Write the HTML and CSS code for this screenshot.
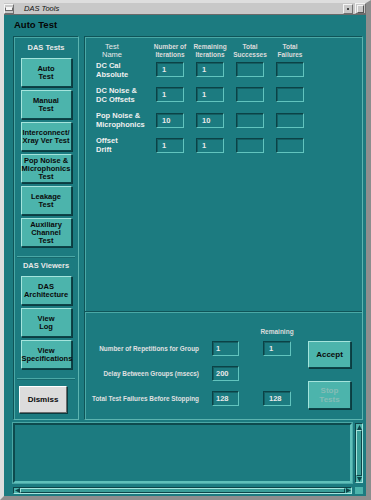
FILE: index.html
```html
<!DOCTYPE html>
<html lang="en">
<head>
    <meta charset="UTF-8">
    <meta name="viewport" content="width=device-width, initial-scale=1.0">
    <title>DAS Tools</title>
    <link rel="stylesheet" href="styles.css">
</head>
<body>
    <div class="window">
        <div class="titlebar">
            <span class="tb-btn menu"><span class="bar"></span></span>
            <span class="tb-title">DAS Tools</span>
            <span class="tb-btn mini"><span class="dot"></span></span>
            <span class="tb-btn maxi"><span class="sq"></span></span>
        </div>

        <div class="client">
            <h1>Auto Test</h1>

            <div class="panels">
                <div class="side">
                    <div class="side-label">DAS Tests</div>
                    <button class="btn">Auto<br>Test</button>
                    <button class="btn">Manual<br>Test</button>
                    <button class="btn">Interconnect/<br>Xray Ver Test</button>
                    <button class="btn">Pop Noise &amp;<br>Microphonics<br>Test</button>
                    <button class="btn">Leakage<br>Test</button>
                    <button class="btn">Auxiliary<br>Channel<br>Test</button>
                    <div class="sep"></div>
                    <div class="side-label">DAS Viewers</div>
                    <button class="btn">DAS<br>Architecture</button>
                    <button class="btn">View<br>Log</button>
                    <button class="btn">View<br>Specifications</button>
                    <div class="sep"></div>
                    <button class="btn dismiss">Dismiss</button>
                </div>

                <div class="main">
                    <div class="tests head">
                        <div class="th name"><span>Test</span><span>Name</span></div>
                        <div class="th"><span>Number of</span><span>Iterations</span></div>
                        <div class="th"><span>Remaining</span><span>Iterations</span></div>
                        <div class="th"><span>Total</span><span>Successes</span></div>
                        <div class="th"><span>Total</span><span>Failures</span></div>
                    </div>

                    <div class="tests rows">
                        <div class="row-label">DC Cal<br>Absolute</div>
                        <div class="field">1</div>
                        <div class="field">1</div>
                        <div class="field"></div>
                        <div class="field"></div>

                        <div class="row-label">DC Noise &amp;<br>DC Offsets</div>
                        <div class="field">1</div>
                        <div class="field">1</div>
                        <div class="field"></div>
                        <div class="field"></div>

                        <div class="row-label">Pop Noise &amp;<br>Microphonics</div>
                        <div class="field">10</div>
                        <div class="field">10</div>
                        <div class="field"></div>
                        <div class="field"></div>

                        <div class="row-label">Offset<br>Drift</div>
                        <div class="field">1</div>
                        <div class="field">1</div>
                        <div class="field"></div>
                        <div class="field"></div>
                    </div>

                    <div class="settings">
                        <div class="params">
                            <div class="remaining"><span>Remaining</span></div>
                            <div class="param-grid">
                                <div class="param-label">Number of Repetitions for Group</div>
                                <div class="field short">1</div>
                                <div class="field">1</div>

                                <div class="param-label">Delay Between Groups (msecs)</div>
                                <div class="field short">200</div>
                                <div></div>

                                <div class="param-label">Total Test Failures Before Stopping</div>
                                <div class="field short">128</div>
                                <div class="field">128</div>
                            </div>
                        </div>
                        <div class="actions">
                            <button class="btn accept">Accept</button>
                            <button class="btn stop">Stop<br>Tests</button>
                        </div>
                    </div>
                </div>
            </div>

            <div class="log">
                <div class="log-text"></div>
                <div class="vscroll">
                    <span class="arrow"><svg width="5" height="5" viewBox="0 0 5 5"><path d="M0 5 L2.5 0 L5 5 Z" fill="#0d4448"/></svg></span>
                    <span class="thumb"></span>
                    <span class="arrow"><svg width="5" height="5" viewBox="0 0 5 5"><path d="M0 0 L5 0 L2.5 5 Z" fill="#0d4448"/></svg></span>
                </div>
                <div class="hscroll">
                    <span class="arrow"><svg width="5" height="5" viewBox="0 0 5 5"><path d="M5 0 L5 5 L0 2.5 Z" fill="#0d4448"/></svg></span>
                    <span class="thumb"></span>
                    <span class="arrow"><svg width="5" height="5" viewBox="0 0 5 5"><path d="M0 0 L5 2.5 L0 5 Z" fill="#0d4448"/></svg></span>
                </div>
                <div class="corner"></div>
            </div>
        </div>
    </div>
</body>
</html>
```

FILE: styles.css
```css
body {
    margin: 0;
    font-family: "Liberation Sans", Arial, sans-serif;
    background-color: #bdbdbd;
}
.window {
    width: 371px;
    height: 500px;
    box-sizing: border-box;
    display: flex;
    flex-direction: column;
    border-style: solid;
    border-width: 3px 5px 4px 4px;
    border-color: #dedede #8e8e8e #8e8e8e #dedede;
    background-color: #c4c4c4;
}
.titlebar {
    height: 11px;
    display: flex;
    align-items: center;
    gap: 2px;
    background-color: #c8c8c8;
    border-bottom: 1px solid #6a6a6a;
}
.tb-btn {
    box-sizing: border-box;
    display: flex;
    align-items: center;
    justify-content: center;
    border: 1px solid;
    border-color: #f4f4f4 #707070 #707070 #f4f4f4;
    background-color: #c8c8c8;
}
.menu {
    width: 10px;
    height: 10px;
}
.menu .bar {
    width: 6px;
    height: 2px;
    background-color: #f4f4f4;
    border: 1px solid #6a6a6a;
    border-top-color: #f4f4f4;
}
.tb-title {
    margin-left: 8px;
    font-size: 7.5px;
    font-style: italic;
    color: #111;
}
.mini {
    margin-left: auto;
    width: 10px;
    height: 10px;
}
.mini .dot {
    width: 2px;
    height: 2px;
    background-color: #444;
}
.maxi {
    width: 11px;
    height: 11px;
}
.maxi .sq {
    width: 5px;
    height: 6px;
    border: 1px solid #555;
    border-top-color: #f4f4f4;
    border-left-color: #f4f4f4;
}
.client {
    flex: 1;
    display: flex;
    flex-direction: column;
    padding: 4px 3px 2px 9px;
    background-color: #1c7b80;
}
h1 {
    margin: 0 0 5px 1px;
    font-size: 9.5px;
    line-height: 12px;
    color: #050505;
}
.panels {
    height: 384px;
    display: flex;
    gap: 5px;
}
.side {
    width: 66px;
    box-sizing: border-box;
    display: flex;
    flex-direction: column;
    align-items: center;
    padding-top: 6px;
    border: 1px solid #5cb4b0;
    border-top-color: #0f5458;
    border-left-color: #0f5458;
    box-shadow: inset 1px 1px 0 #4aa8a6;
}
.side-label {
    font-size: 7.5px;
    font-weight: bold;
    line-height: 10px;
    color: #e8e8e8;
    margin-bottom: 5px;
}
.btn {
    width: 51px;
    height: 29px;
    box-sizing: border-box;
    padding: 0;
    margin: 0 0 3px 0;
    font-family: "Liberation Sans", Arial, sans-serif;
    font-size: 7.5px;
    font-weight: bold;
    line-height: 8px;
    color: #0a0a0a;
    white-space: nowrap;
    background-color: #4cb4ac;
    border: 1px solid;
    border-color: #a4e4dc #0d4448 #0d4448 #a4e4dc;
    box-shadow: 1px 1px 0 #0b3c40;
    overflow: visible;
}
.sep {
    align-self: stretch;
    margin: 6px 3px 3px;
    height: 1px;
    background-color: #4aa8a6;
    border-bottom: 1px solid #176a6e;
}
.dismiss {
    width: 48px;
    height: 27px;
    align-self: flex-start;
    margin: 3px 0 0 5px;
    font-size: 8px;
    background-color: #dcdcdc;
    border-color: #ffffff #6c6c6c #6c6c6c #ffffff;
}
.main {
    flex: 1;
    box-sizing: border-box;
    display: flex;
    flex-direction: column;
    padding-top: 6px;
    border: 1px solid #5cb4b0;
    border-top-color: #0f5458;
    border-left-color: #0f5458;
    box-shadow: inset 1px 1px 0 #4aa8a6;
}
.tests {
    display: grid;
    grid-template-columns: 60px 40px 40px 40px 40px;
    padding-left: 11px;
}
.head {
    height: 16px;
    margin-bottom: 1.5px;
}
.th {
    width: 28px;
    display: flex;
    flex-direction: column;
    align-items: center;
    font-size: 6.5px;
    font-weight: bold;
    line-height: 8px;
    color: #dcdcdc;
    white-space: nowrap;
}
.th.name {
    width: 32px;
    font-size: 7.5px;
    font-weight: normal;
    color: #e8e8e8;
}
.rows {
    grid-auto-rows: 18px;
    row-gap: 7.33px;
    align-items: center;
}
.row-label {
    font-size: 7.5px;
    font-weight: bold;
    line-height: 9px;
    color: #f0f0f0;
    white-space: nowrap;
}
.field {
    width: 28px;
    height: 15px;
    box-sizing: border-box;
    padding-left: 5px;
    font-size: 7.5px;
    font-weight: bold;
    line-height: 13px;
    color: #e8e8e8;
    background-color: #1c7b80;
    border: 1px solid;
    border-color: #0b4246 #62c4be #62c4be #0b4246;
    box-shadow: inset 1px 1px 0 #145e62;
}
.settings {
    margin-top: auto;
    display: flex;
    align-items: flex-start;
    padding: 16px 0 10px;
    border-top: 1px solid #0f5458;
    box-shadow: inset 0 1px 0 #4aa8a6;
}
.remaining {
    display: flex;
    justify-content: center;
    width: 28px;
    margin: 0 0 5px 178px;
    font-size: 6.5px;
    font-weight: bold;
    line-height: 8px;
    color: #dcdcdc;
}
.param-grid {
    display: grid;
    grid-template-columns: 114px 27px 39px;
    grid-auto-rows: 15px;
    column-gap: 13px;
    row-gap: 10px;
    align-items: center;
}
.param-grid .field {
    justify-self: end;
}
.param-grid .field.short {
    width: 27px;
    padding-left: 3px;
}
.param-label {
    text-align: right;
    white-space: nowrap;
    font-size: 6.4px;
    font-weight: bold;
    color: #e0e0e0;
}
.actions {
    display: flex;
    flex-direction: column;
    gap: 13px;
    margin: 13px 0 0 17px;
}
.accept {
    width: 43px;
    height: 27px;
    margin: 0;
    font-size: 8px;
}
.stop {
    width: 43px;
    height: 28px;
    margin: 0;
    font-size: 8px;
    line-height: 9px;
    color: #86bcb6;
}
.log {
    margin-top: 3px;
    display: grid;
    grid-template-columns: 339px 8px;
    grid-template-rows: 60px 7px;
    gap: 4px 3px;
}
.log-text {
    box-sizing: border-box;
    background-color: #1c7b80;
    border: 2px solid;
    border-color: #0d4a4e #5fc0ba #5fc0ba #0d4a4e;
    box-shadow: 0 0 0 1px #4aa8a6;
}
.vscroll, .hscroll {
    box-sizing: border-box;
    display: flex;
    background-color: #4cb4ac;
    border: 1px solid;
    border-color: #0d4448 #a4e4dc #a4e4dc #0d4448;
}
.vscroll {
    flex-direction: column;
}
.arrow {
    width: 6px;
    height: 6px;
    display: flex;
    align-items: center;
    justify-content: center;
    background-color: #4cb4ac;
    border: 0 solid #0d4448;
}
.arrow svg {
    display: block;
}
.thumb {
    flex: 1;
    box-sizing: border-box;
    border: 1px solid;
    border-color: #a4e4dc #0d4448 #0d4448 #a4e4dc;
    background-color: #3a9e98;
}
.hscroll .arrow {
    height: 5px;
}
.corner {
    background-color: #4cb4ac;
}
```
